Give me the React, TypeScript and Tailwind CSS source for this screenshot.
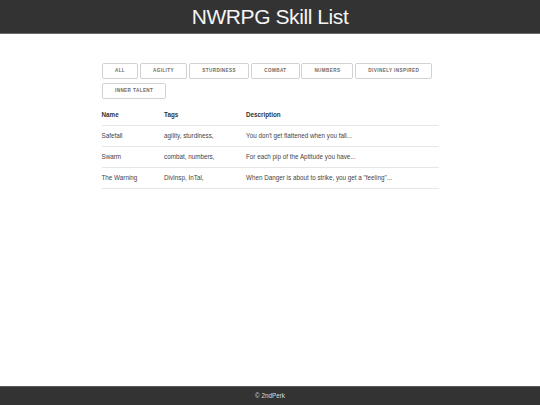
import React from 'react';

const filters = [
  { label: 'All', w: 'w-[36px]' },
  { label: 'Agility', w: 'w-[47.4px]' },
  { label: 'Sturdiness', w: 'w-[60.3px]' },
  { label: 'Combat', w: 'w-[48.6px]' },
  { label: 'Numbers', w: 'w-[52px]' },
  { label: 'Divinely Inspired', w: 'w-[77px]' },
  { label: 'Inner Talent', w: 'w-[64.3px]' },
];

const skills = [
  { name: 'Safefall', tags: 'agility, sturdiness,', description: "You don't get flattened when you fall..." },
  { name: 'Swarm', tags: 'combat, numbers,', description: 'For each pip of the Aptitude you have...' },
  { name: 'The Warning', tags: 'DivInsp, InTal,', description: 'When Danger is about to strike, you get a "feeling"...' },
];

export default function App() {
  return (
    <div
      className="flex min-h-screen flex-col bg-white text-[#222]"
      style={{ fontFamily: '"Liberation Sans", Arial, Helvetica, sans-serif' }}
    >
      <header className="flex h-[34px] items-center justify-center border-b border-[#6a6a6a] bg-[#333]">
        <h1 className="text-[21px] leading-none tracking-[-0.42px] text-[#f5f5f5]">NWRPG Skill List</h1>
      </header>

      <main className="flex-1">
        <div className="mx-auto mt-[29px] w-[337px]">
          <div className="flex flex-wrap gap-x-[1.8px] gap-y-[4px] pl-[0.5px]">
            {filters.map((f) => (
              <button
                key={f.label}
                className={`${f.w} flex h-[16px] items-center justify-center whitespace-nowrap rounded-[2px] border border-[#d2d2d2] bg-transparent text-[4.6px] font-bold uppercase leading-none tracking-[0.42px] text-[#6a6a6a]`}
              >
                {f.label}
              </button>
            ))}
          </div>

          <table className="mt-[5.5px] w-full table-fixed border-collapse text-left text-[6.3px] leading-[10.1px]">
            <colgroup>
              <col className="w-[56.2px]" />
              <col className="w-[82px]" />
              <col />
            </colgroup>
            <thead>
              <tr className="border-b border-[#e6e6e6]">
                <th className="py-[5.06px] pr-[6.33px] font-bold text-[#333]">Name</th>
                <th className="px-[6.33px] py-[5.06px] font-bold text-[#333]">Tags</th>
                <th className="py-[5.06px] pl-[6.33px] font-bold text-[#333]">Description</th>
              </tr>
            </thead>
            <tbody className="text-[#444]">
              {skills.map((s) => (
                <tr key={s.name} className="border-b border-[#e6e6e6]">
                  <td className="py-[5.06px] pr-[6.33px]">{s.name}</td>
                  <td className="px-[6.33px] py-[5.06px]">{s.tags}</td>
                  <td className="py-[5.06px] pl-[6.33px]">{s.description}</td>
                </tr>
              ))}
            </tbody>
          </table>
        </div>
      </main>

      <footer className="flex h-[19px] items-center justify-center border-t border-[#5a5a5a] bg-[#333] text-[6.3px] text-[#ddd]">
        © 2ndPerk
      </footer>
    </div>
  );
}
